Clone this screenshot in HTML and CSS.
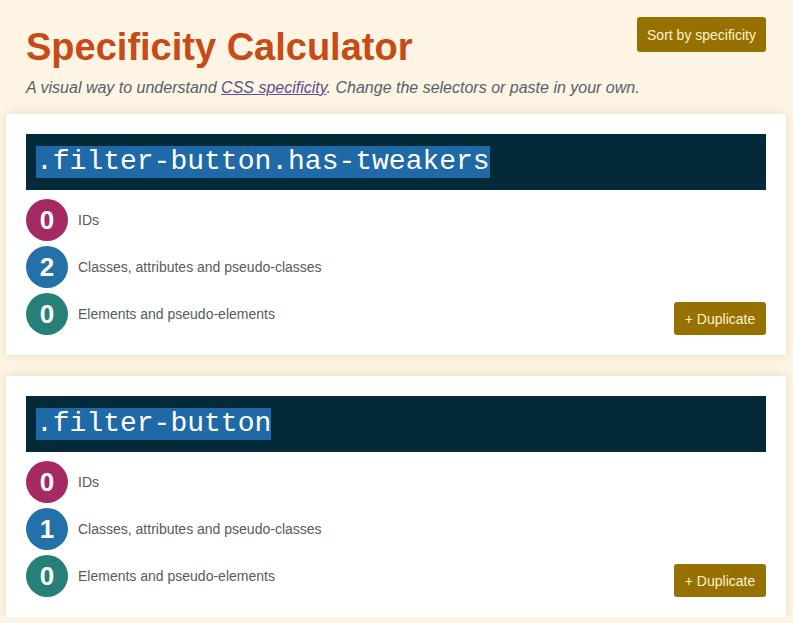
FILE: index.html
```html
<!DOCTYPE html>
<html>
<head>
<meta charset="utf-8">
<link rel="stylesheet" href="styles.css">
</head>
<body>
<header class="header">
  <h1 class="title">Specificity Calculator</h1>
  <button class="btn sort-btn">Sort by specificity</button>
  <p class="lead">A visual way to understand <a class="link" href="#">CSS specificity</a>. Change the selectors or paste in your own.</p>
</header>
<main class="cards">
  <section class="card">
    <div class="selector"><span class="sel-text">.filter-button.has-tweakers</span></div>
    <div class="card-body">
      <ul class="counts">
        <li class="count"><span class="dot dot-id">0</span><span class="label">IDs</span></li>
        <li class="count"><span class="dot dot-class">2</span><span class="label">Classes, attributes and pseudo-classes</span></li>
        <li class="count"><span class="dot dot-el">0</span><span class="label">Elements and pseudo-elements</span></li>
      </ul>
      <button class="btn dup-btn">+ Duplicate</button>
    </div>
  </section>
  <section class="card">
    <div class="selector"><span class="sel-text">.filter-button</span></div>
    <div class="card-body">
      <ul class="counts">
        <li class="count"><span class="dot dot-id">0</span><span class="label">IDs</span></li>
        <li class="count"><span class="dot dot-class">1</span><span class="label">Classes, attributes and pseudo-classes</span></li>
        <li class="count"><span class="dot dot-el">0</span><span class="label">Elements and pseudo-elements</span></li>
      </ul>
      <button class="btn dup-btn">+ Duplicate</button>
    </div>
  </section>
</main>
</body>
</html>
```
FILE: styles.css
```css
* { box-sizing: border-box; }
html, body {
  margin: 0;
  padding: 0;
  background: #fdf4e3;
  font-family: "Liberation Sans", Arial, sans-serif;
  overflow: hidden;
}
body {
  padding: 17px 7px 0 6px;
}
.header {
  display: grid;
  grid-template-columns: 1fr auto;
  align-items: start;
  padding: 0 20px;
  height: 97px;
}
.title {
  grid-column: 1;
  margin: 6px 0 0;
  font-size: 38px;
  line-height: 48px;
  font-weight: bold;
  color: #c74b16;
}
.sort-btn {
  grid-column: 2;
  grid-row: 1;
}
.lead {
  grid-column: 1 / -1;
  margin: -9px 0 0;
  font-size: 16px;
  line-height: 22px;
  font-style: italic;
  color: #56606b;
}
.link {
  color: #5a4f8f;
}
.btn {
  border: none;
  background: #967000;
  color: #fdf3d0;
  font-family: "Liberation Sans", Arial, sans-serif;
  font-size: 14px;
  border-radius: 3px;
  cursor: pointer;
}
.sort-btn {
  height: 35px;
  width: 129px;
  padding: 0;
}
.cards {
  display: flex;
  flex-direction: column;
  gap: 21px;
}
.card {
  background: #fff;
  padding: 20px;
  box-shadow: 0 0 10px rgba(120, 90, 30, 0.15);
}
.selector {
  background: #022a38;
  height: 56px;
  padding: 12px 10px 0;
}
.sel-text {
  font-family: "Liberation Mono", monospace;
  font-size: 28px;
  line-height: 32px;
  display: inline-block;
  background: #1f6aa6;
  color: #fff;
}
.card-body {
  display: flex;
  justify-content: space-between;
  align-items: flex-end;
  margin-top: 9px;
}
.counts {
  list-style: none;
  margin: 0;
  padding: 0;
  display: flex;
  flex-direction: column;
  gap: 5px;
}
.count {
  display: flex;
  align-items: center;
  gap: 10px;
}
.dot {
  width: 42px;
  height: 42px;
  border-radius: 50%;
  display: flex;
  align-items: center;
  justify-content: center;
  color: #fff;
  font-weight: bold;
  font-size: 26px;
}
.dot-id { background: #a52a62; }
.dot-class { background: #2470a8; }
.dot-el { background: #268078; }
.label {
  font-size: 14px;
  color: #555b60;
}
.dup-btn {
  width: 92px;
  height: 33px;
  padding: 0;
}
```
